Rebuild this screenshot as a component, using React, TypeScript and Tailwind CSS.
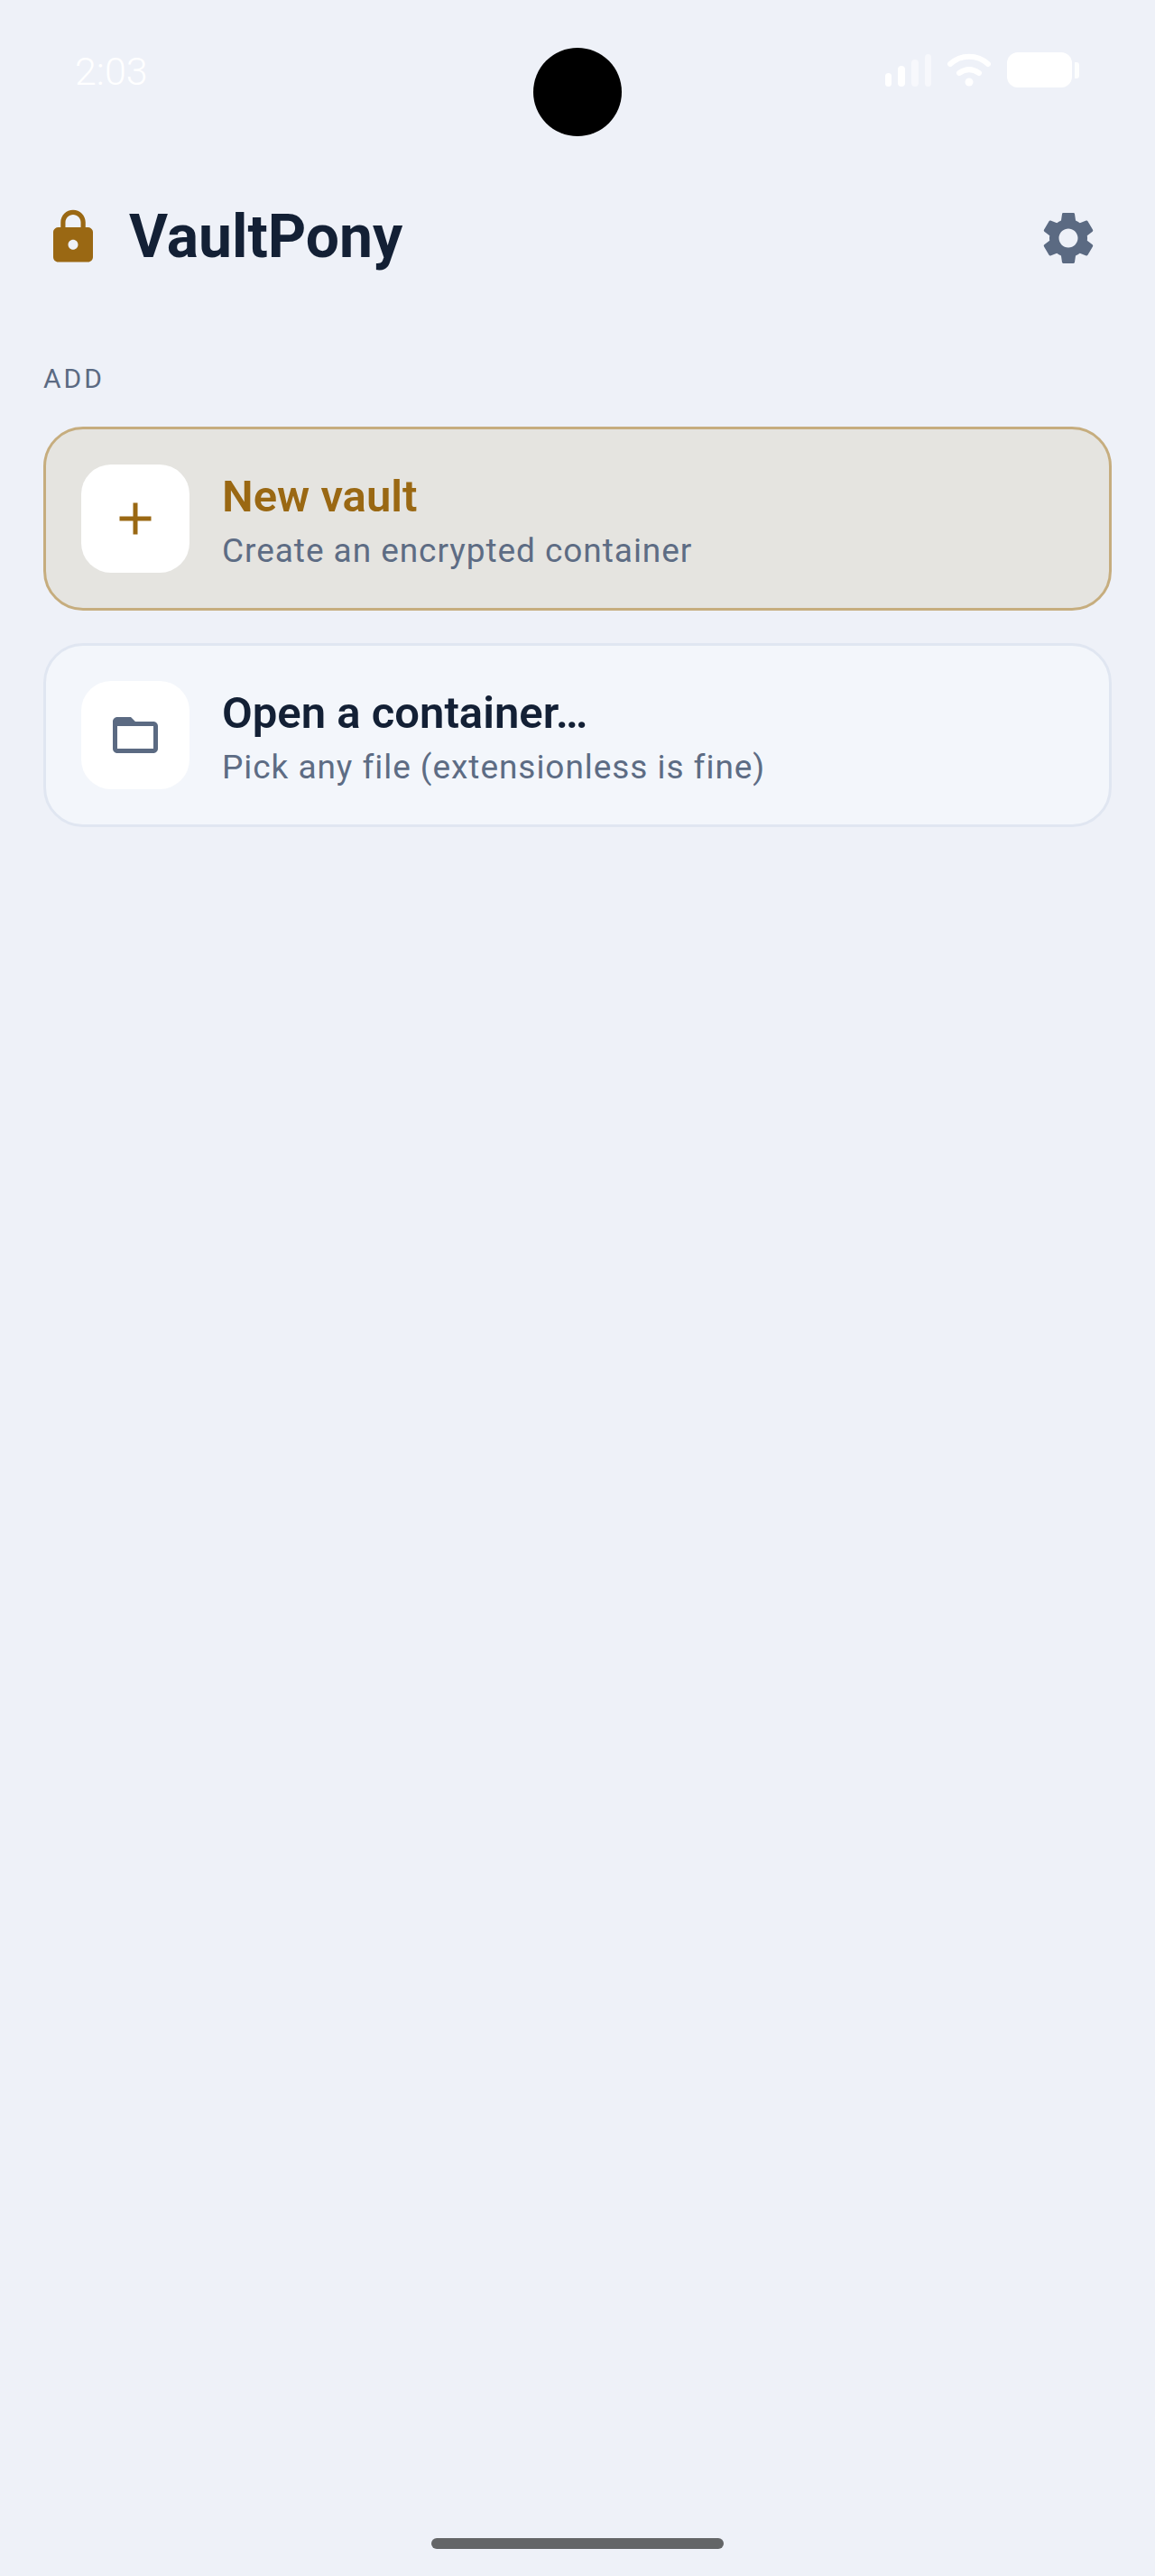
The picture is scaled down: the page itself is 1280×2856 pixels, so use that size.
import React from "react";
import { MdAdd, MdLock, MdSettings } from "react-icons/md";

const StatusBar = () => (
  <div className="h-[207px] pt-[58px] pl-[83px] pr-[84px] flex items-start justify-between text-white">
    <span className="text-[43px] leading-[42px] font-light">2:03</span>
    <div className="flex items-start">
      {/* signal */}
      <div className="flex items-end gap-[7px] h-[38px] w-[51px]">
        <div className="w-[8px] h-[15px] rounded-full bg-white"></div>
        <div className="w-[8px] h-[23px] rounded-full bg-white"></div>
        <div className="w-[9px] h-[30px] rounded-full bg-white/50"></div>
        <div className="w-[8px] h-[36px] rounded-full bg-white/50"></div>
      </div>
      {/* wifi */}
      <svg className="ml-[18px] mt-[1px]" width="48" height="38" viewBox="0 0 48 38" fill="none">
        <path d="M3 12 C15 1 33 1 45 12" stroke="white" strokeWidth="6" strokeLinecap="round" />
        <path d="M13 22 C20 17 28 17 35 22" stroke="white" strokeWidth="6" strokeLinecap="round" />
        <circle cx="24" cy="32" r="4.5" fill="white" />
      </svg>
      <div className="ml-[18px] w-[72px] h-[39px] rounded-[12px] bg-white"></div>
      <div className="ml-[3px] mt-[11px] w-[5px] h-[18px] rounded-r-[3px] bg-white/90"></div>
    </div>
  </div>
);

const FolderIcon = () => (
  <svg width="60" height="60" viewBox="0 0 24 24" className="text-[#5b6a82]" fill="currentColor">
    <path fillRule="evenodd" d="M4 4h6l2 2h8c1.1 0 2 .9 2 2v10c0 1.1-.9 2-2 2H4c-1.1 0-2-.9-2-2V6c0-1.1.9-2 2-2zm0 4v10h16V8H4z" />
  </svg>
);

const ActionCard = ({
  icon,
  title,
  subtitle,
  cardClass,
  titleClass,
}: {
  icon: React.ReactNode;
  title: string;
  subtitle: string;
  cardClass: string;
  titleClass: string;
}) => (
  <button className={`w-full h-[204px] rounded-[44px] border-[3px] pl-[39px] pr-[39px] flex items-center gap-[36px] text-left ${cardClass}`}>
    <div className="w-[120px] h-[120px] rounded-[33px] bg-white flex items-center justify-center shrink-0">
      {icon}
    </div>
    <div className="flex flex-col pt-[5px]">
      <div className={`text-[49px] leading-[58px] font-semibold ${titleClass}`}>{title}</div>
      <div className="text-[37px] leading-[46px] tracking-[0.95px] text-[#5d6c84] mt-[8px]">{subtitle}</div>
    </div>
  </button>
);

const App = () => {
  return (
    <div className="relative w-full h-[2856px] bg-[#eef1f8] overflow-hidden font-['Roboto',sans-serif]">
      <StatusBar />
      {/* camera */}
      <div className="absolute left-[591px] top-[53px] w-[98px] h-[98px] rounded-full bg-black"></div>

      <div className="pl-[48px] pr-[48px]">
        {/* header */}
        <div className="flex items-center justify-between h-[112px]">
          <div className="flex items-center">
            <MdLock className="text-[#9a6813] mr-[29px]" size={66} />
            <h1 className="text-[66px] leading-[80px] font-bold text-[#132035]">VaultPony</h1>
          </div>
          <MdSettings className="text-[#5b6a82] mr-[13px] mt-[2px]" size={70} />
        </div>

        <div className="mt-[83px] text-[30px] leading-[36px] tracking-[3px] text-[#5b6a82]">ADD</div>

        <div className="mt-[35px] flex flex-col gap-[36px]">
          <ActionCard
            icon={<MdAdd className="text-[#9a6813]" size={60} />}
            title="New vault"
            subtitle="Create an encrypted container"
            cardClass="bg-[#e5e4e0] border-[#c6ad7e]"
            titleClass="text-[#9a6813]"
          />
          <ActionCard
            icon={<FolderIcon />}
            title="Open a container…"
            subtitle="Pick any file (extensionless is fine)"
            cardClass="bg-[#f3f6fb] border-[#e0e6f1]"
            titleClass="text-[#132035]"
          />
        </div>
      </div>

      {/* home indicator */}
      <div className="absolute left-[478px] top-[2814px] w-[324px] h-[12px] rounded-full bg-[#636567]"></div>
    </div>
  );
};

export default App;
